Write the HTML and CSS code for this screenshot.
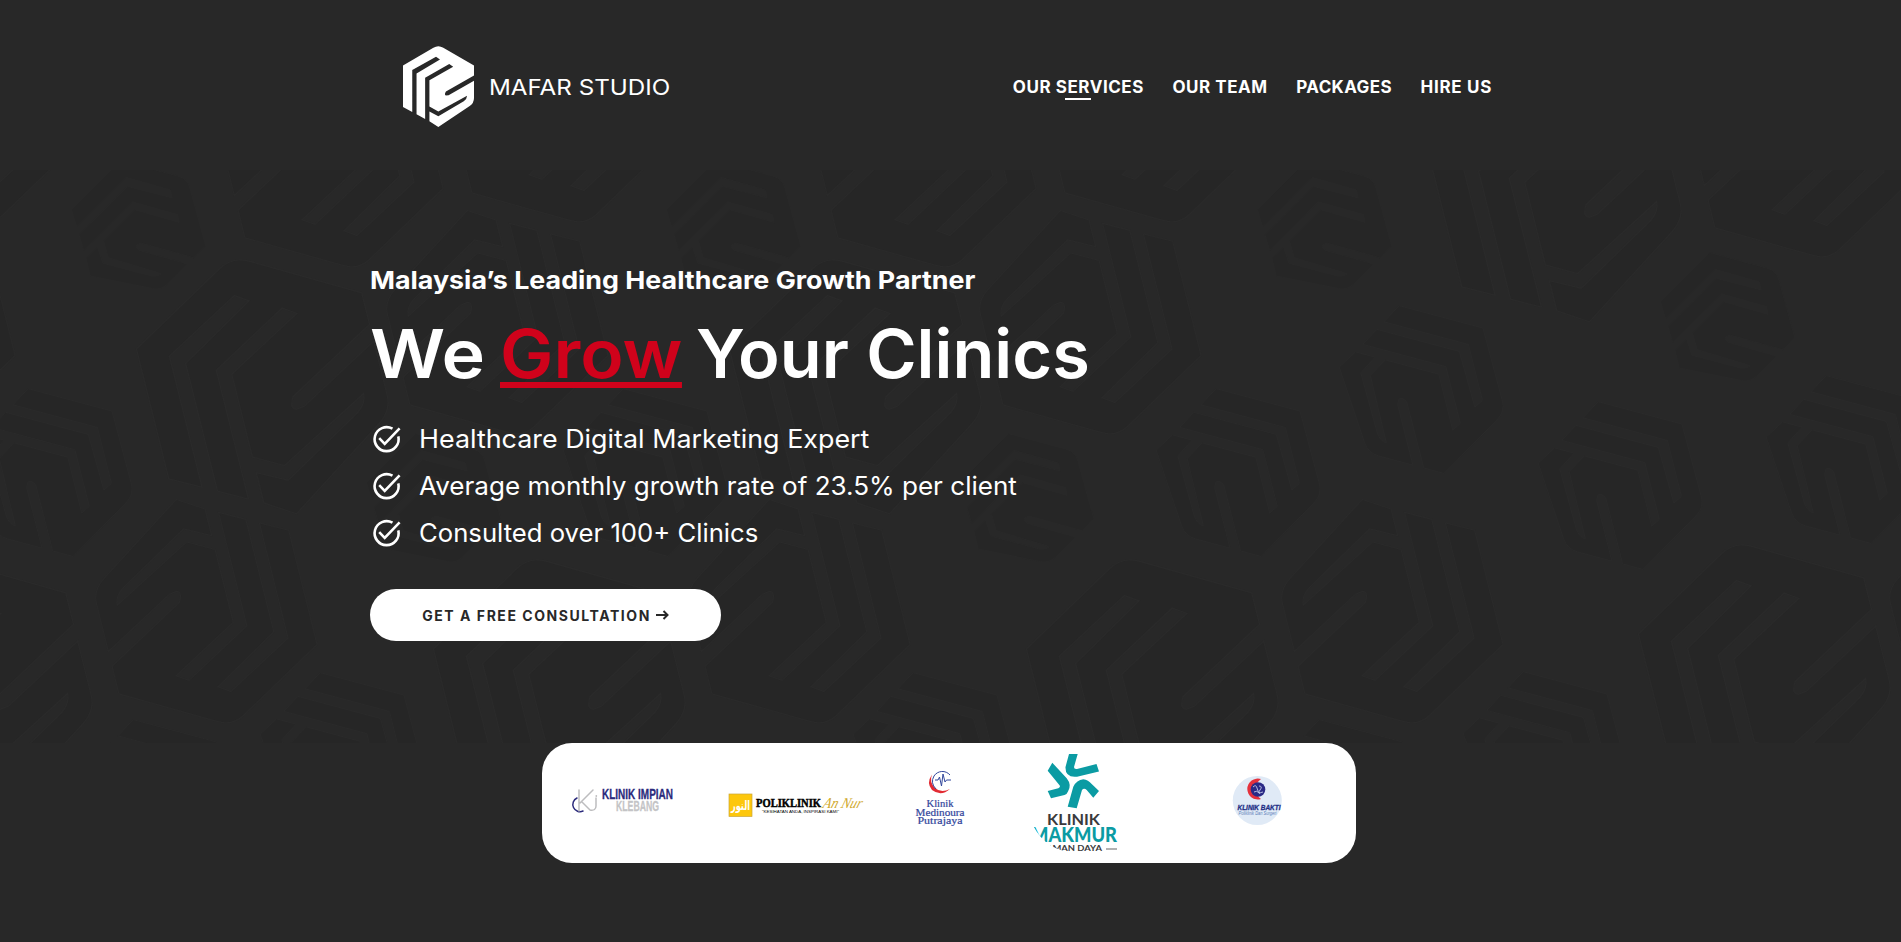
FILE: index.html
```html
<!DOCTYPE html>
<html lang="en">
<head>
<meta charset="utf-8">
<title>Mafar Studio</title>
<link rel="stylesheet" href="styles.css">
</head>
<body>
<svg class="defs" width="0" height="0" aria-hidden="true">
  <defs>
    <g id="mark">
      <path d="M38 232V108L130 55Q145 46 160 55L253 108V138L168 186Q162 196 168 198L176 197L253 154V205Q253 220 240 229L145 292L118 275V246L145 260L222 215Q232 208 232 199L145 246L118 231V152L190 112L178 104L105 145V268L79 254V132L150 90L138 82L66 122V247Z"/>
    </g>
    <g id="check" fill="none" stroke="#fff" stroke-width="2.6">
      <path d="M20.500 4.700A12 12 0 1 0 26.300 12.400"/>
      <path d="M7.200 14.200L12.700 19.800L27.600 4.400"/>
    </g>
  </defs>
</svg>
<header class="header">
  <a class="brand">
    <svg class="brand-mark" viewBox="38 50 215 242" preserveAspectRatio="none"><use href="#mark"/></svg>
    <span class="brand-name">MAFAR STUDIO</span>
  </a>
  <nav class="nav">
    <a class="n1 active">OUR SERVICES</a>
    <a class="n2">OUR TEAM</a>
    <a class="n3">PACKAGES</a>
    <a class="n4">HIRE US</a>
  </nav>
</header>
<main class="hero">
  <svg class="pattern" viewBox="0 170 1901 573" aria-hidden="true">
    <defs>
      <g id="b"><use href="#mark" transform="rotate(-14) scale(1.08) translate(-145 -171)"/></g>
      <g id="c"><use href="#mark" transform="rotate(166) scale(.95) translate(-145 -171)"/></g>
      <g id="d"><use href="#mark" transform="rotate(105) scale(.7) translate(-145 -171)"/></g>
      <g id="s"><use href="#mark" transform="rotate(45) scale(.56) translate(-145 -171)"/></g>
    </defs>
    <use href="#d" x="1238" y="472"/><use href="#d" x="1421" y="389"/><use href="#d" x="1620" y="485"/><use href="#d" x="1848" y="459"/>
    <use href="#d" x="1545" y="755"/><use href="#d" x="342" y="756"/><use href="#d" x="935" y="756"/><use href="#d" x="50" y="472"/>
    <use href="#d" x="645" y="472"/><use href="#d" x="155" y="803"/><use href="#d" x="1341" y="803"/>
    <use href="#s" x="138" y="228"/><use href="#s" x="733" y="228"/><use href="#s" x="1324" y="228"/><use href="#s" x="1727" y="320"/>
    <use href="#s" x="1026" y="501"/><use href="#s" x="433" y="501"/>
    <use href="#b" x="1155" y="687"/><use href="#b" x="562" y="687"/><use href="#b" x="-31" y="687"/><use href="#b" x="1767" y="672"/>
    <use href="#b" x="265" y="387"/><use href="#b" x="858" y="387"/><use href="#b" x="1558" y="195"/>
    <use href="#c" x="1390" y="611"/><use href="#c" x="797" y="611"/><use href="#c" x="204" y="611"/><use href="#c" x="1998" y="611"/>
    <use href="#c" x="1088" y="322"/><use href="#c" x="495" y="322"/><use href="#c" x="-98" y="322"/>
    <use href="#c" x="330" y="155"/><use href="#c" x="923" y="155"/><use href="#c" x="1150" y="110"/><use href="#c" x="557" y="110"/><use href="#c" x="-36" y="110"/><use href="#c" x="1800" y="145"/>
  </svg>
  <div class="content">
    <h2 class="kicker">Malaysia’s Leading Healthcare Growth Partner</h2>
    <h1 class="title"><span class="t1">We</span><span class="grow">Grow</span><span class="t3">Your Clinics</span></h1>
    <ul class="points">
      <li><svg viewBox="0 0 30 30"><use href="#check"/></svg><span class="p1">Healthcare Digital Marketing Expert</span></li>
      <li><svg viewBox="0 0 30 30"><use href="#check"/></svg><span class="p2">Average monthly growth rate of 23.5% per client</span></li>
      <li><svg viewBox="0 0 30 30"><use href="#check"/></svg><span class="p3">Consulted over 100+ Clinics</span></li>
    </ul>
    <a class="cta"><span>GET A FREE CONSULTATION</span><svg viewBox="0 0 13 10"><path d="M0 5H11M7.500 1L11.500 5L7.500 9" fill="none" stroke="#282828" stroke-width="2"/></svg></a>
  </div>
</main>
<section class="clients">
  <svg class="logos" viewBox="542 743 814 120">
    <g fill="none" stroke-linecap="round">
      <path d="M577 798A7 7 0 1 0 583 811" stroke="#2b2a7c" stroke-width="1.5"/>
      <path d="M579 790V811M593 790L580 803M582 802L590 810M596 798V806Q596 811 590 810" stroke="#bdbdbf" stroke-width="1.5"/>
    </g>
    <circle cx="596.3" cy="796" r=".9" fill="#bdbdbf"/>
    <g class="condensed">
      <text x="602" y="799" font-size="14.5" textLength="71" lengthAdjust="spacingAndGlyphs" fill="#2b2a7c" stroke="#2b2a7c" stroke-width=".3">KLINIK IMPIAN</text>
      <text x="616" y="811.3" font-size="14.5" textLength="43" lengthAdjust="spacingAndGlyphs" fill="#c4c4c6" stroke="#c4c4c6" stroke-width=".3">KLEBANG</text>
    </g>
    <rect x="729" y="794" width="23" height="22.5" fill="#fdc70c" stroke="#c9a63a" stroke-width=".7"/>
    <text x="731" y="810" font-size="13" font-weight="700" textLength="19" lengthAdjust="spacingAndGlyphs" fill="#fff" class="arabic">النور</text>
    <text x="756" y="807" font-size="13.5" textLength="65" lengthAdjust="spacingAndGlyphs" class="didone">POLIKLINIK</text>
    <text x="762" y="813.4" font-size="4" textLength="77" lengthAdjust="spacingAndGlyphs" class="tiny">"KESIHATAN ANDA, INSPIRASI KAMI"</text>
    <text x="0" y="0" font-size="15" textLength="39" lengthAdjust="spacingAndGlyphs" class="script" transform="translate(822 808) skewX(-18)">An Nur</text>
    <g fill="none">
      <path d="M932 774.500Q926 783 932 790Q941 797 950 789Q941 793.500 935 788Q929 782 932 774.500Z" fill="#e22b33"/>
      <path d="M950 775A10 10 0 0 0 934 776Q930 783 936 789" stroke="#33479c" stroke-width="1"/>
      <path d="M935 780H938L939.500 777L941.500 786L943 774L945 782L946.500 780H951" stroke="#33479c" stroke-width="1"/>
    </g>
    <g class="slab">
      <text x="926.500" y="807.300" textLength="27" lengthAdjust="spacingAndGlyphs">Klinik</text>
      <text x="915.500" y="815.800" textLength="49" lengthAdjust="spacingAndGlyphs">Medinoura</text>
      <text x="917.500" y="824.300" textLength="45" lengthAdjust="spacingAndGlyphs">Putrajaya</text>
    </g>
    <g fill="#0b9ba3">
      <path d="M1069 754H1077.700L1074 767Q1074 769.500 1077 769L1096.500 764L1099 771.500L1077 776.700Q1065 778 1065.500 767Z"/>
      <path d="M1052.300 762.700L1066.700 778.300Q1072 785 1068 791.500Q1067 794.300 1064.500 795L1051 798.300L1047.700 791L1058.300 788.300Q1061 786.700 1059.300 785L1047.700 770.700Z"/>
      <path d="M1067.700 806.700L1073.300 786.700Q1076.700 780 1083.300 779.300Q1088.300 780 1091.700 784L1099 791L1093.300 797.700L1086.700 790Q1084 787.700 1082 790L1076.700 808.300Z"/>
    </g>
    <clipPath id="round"><path d="M1034 827Q1046 850 1072 852H1118V809H1034Z"/></clipPath>
    <g class="geo">
      <text x="1047" y="825" font-size="15.800" textLength="53" lengthAdjust="spacingAndGlyphs" fill="#3a3a3c">KLINIK</text>
      <g clip-path="url(#round)">
        <text x="1031" y="842" font-size="20" font-weight="900" textLength="86" lengthAdjust="spacingAndGlyphs" fill="#0b9ba3">MAKMUR</text>
        <text x="1041" y="851" font-size="7.500" textLength="61" lengthAdjust="spacingAndGlyphs" fill="#3a3a3c">TAMAN DAYA</text>
      </g>
    </g>
    <path d="M1106 849H1117" stroke="#999" stroke-width="1.500"/>
    <circle cx="1257.300" cy="800.500" r="24.500" fill="#e0eaf6"/>
    <path d="M1261 779A10.500 10.500 0 1 0 1261 799A12 12 0 0 1 1261 779Z" fill="#e5313c"/>
    <circle cx="1258" cy="789.500" r="7.300" fill="#2a2a86"/>
    <path d="M1253 787Q1256 784 1257 788T1260 794M1259 786Q1263 786 1260 790T1263 792M1254 792Q1257 790 1259 793" fill="none" stroke="#c7cdea" stroke-width=".9"/>
    <g class="bakti">
      <text x="1237.500" y="809.500" font-size="7.500" font-weight="700" textLength="43" lengthAdjust="spacingAndGlyphs" fill="#1f2f86" stroke="#1f2f86" stroke-width=".3">KLINIK BAKTI</text>
      <text x="1238.500" y="815.300" font-size="4.600" textLength="38" lengthAdjust="spacingAndGlyphs" fill="#5a7db8">Poliklinik Dan Surgeri</text>
    </g>
  </svg>
</section>
</body>
</html>
```
FILE: styles.css
```css
* { box-sizing: border-box; }
body {
  margin: 0;
  height: 942px;
  overflow: hidden;
  background: #282828;
  color: #fff;
  font-family: Inter, "Liberation Sans", sans-serif;
}
.defs { position: absolute; }
.header {
  height: 170px;
  padding: 3px 409px 0 403px;
  display: flex;
  align-items: center;
  justify-content: space-between;
}
.brand { display: flex; align-items: center; gap: 15px; }
.brand-mark { width: 71px; height: 81px; fill: #fff; }
.brand-name { font-size: 21.5px; white-space: nowrap; transform: scaleX(1.125); transform-origin: 0 50%; }
.nav { display: flex; gap: 28.5px; font-size: 17px; font-weight: 700; white-space: nowrap; }
.n1, .n2 { letter-spacing: .55px; }
.n3 { letter-spacing: .4px; }
.n4 { letter-spacing: .7px; }
.active { position: relative; }
.active::after {
  content: "";
  position: absolute;
  left: 52px;
  top: 21px;
  width: 26px;
  height: 2px;
  background: #fff;
}
.hero { position: relative; height: 573px; overflow: hidden; }
.pattern {
  position: absolute;
  inset: 0;
  width: 1901px;
  height: 573px;
  fill: #262626;
  stroke: #2a2a2a;
  stroke-width: 1.3;
}
.content { position: relative; padding: 94px 0 0 370px; }
.kicker { margin: 0; width: max-content; font-size: 24.3px; line-height: 32px; font-weight: 700; white-space: nowrap; transform: scaleX(1.104); transform-origin: 0 50%; }
.title { margin: 17px 0 0; display: flex; font-size: 67px; line-height: 82px; font-weight: 600; white-space: nowrap; }
.title span { transform-origin: 0 50%; }
.t1 { flex: 0 0 130px; transform: scaleX(1.1); }
.grow { margin-right: 25px; color: #d0021b; background: linear-gradient(#d0021b, #d0021b) 0 69px / 100% 6px no-repeat; transform: scaleX(1.064); }
.t3 { transform: scaleX(1.022); }
.points { margin: 20px 0 0; padding: 0; list-style: none; }
.points li { height: 47px; display: flex; align-items: center; gap: 17px; font-size: 25.5px; white-space: nowrap; }
.points span { transform-origin: 0 50%; }
.p1 { transform: scaleX(1.054); }
.p2 { transform: scaleX(1.022); }
.p3 { transform: scaleX(1.007); }
.points svg { width: 30px; height: 30px; margin-left: 2px; }
.cta {
  width: 351px;
  height: 52px;
  margin-top: 33px;
  border-radius: 26px;
  background: #fff;
  color: #282828;
  display: flex;
  align-items: center;
  justify-content: center;
  gap: 5px;
  font-size: 14px;
  font-weight: 700;
  letter-spacing: 1.55px;
}
.cta svg { width: 13px; height: 10px; }
.clients { width: 814px; height: 120px; margin-left: 542px; background: #fff; border-radius: 30px; overflow: hidden; }
.logos { display: block; width: 814px; height: 120px; }
.condensed { font-family: "Liberation Sans", sans-serif; font-weight: 700; }
.arabic { font-family: "DejaVu Sans", sans-serif; }
.didone { font-family: "Liberation Serif", serif; font-weight: 700; stroke: #000; stroke-width: .5; }
.script { font-family: "Liberation Serif", serif; font-style: italic; fill: #d0a92c; }
.tiny { font-family: "Liberation Sans", sans-serif; }
.slab { font-family: "Liberation Serif", serif; font-size: 9.5px; fill: #33479c; stroke: #33479c; stroke-width: .2; }
.geo { font-family: Lato, sans-serif; font-weight: 700; }
.bakti { font-family: "Liberation Sans", sans-serif; font-style: italic; }
```
